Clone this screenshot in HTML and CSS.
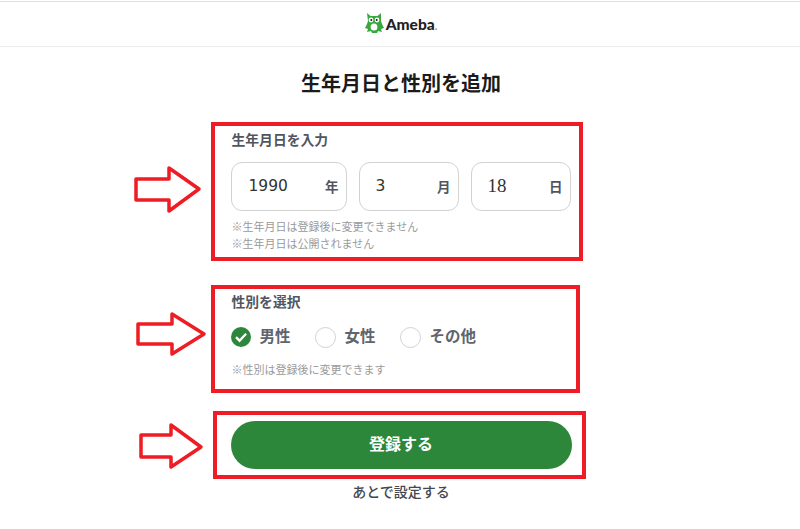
FILE: index.html
```html
<!DOCTYPE html>
<html lang="ja">
<head>
    <meta charset="UTF-8">
    <meta name="viewport" content="width=device-width, initial-scale=1.0">
    <title>生年月日と性別を追加</title>
    <link rel="stylesheet" href="styles.css">
</head>
<body>
    <header class="header">
        <svg class="logo-owl" viewBox="0 0 20 22" width="20" height="22">
            <path fill="#3aa63f" d="M3 1l3.5 3h7L17 1v8l1 3 2 4-3 1 1 3-4-1-1 2H8l-1-2-4 1 1-3-3-1 2-4 1-3z"/>
            <circle cx="7" cy="8" r="2.4" fill="#fff"/>
            <circle cx="13" cy="8" r="2.4" fill="#fff"/>
            <circle cx="7.3" cy="8" r="1" fill="#1c1c1c"/>
            <circle cx="12.7" cy="8" r="1" fill="#1c1c1c"/>
            <ellipse cx="10" cy="15" rx="3.4" ry="3.6" fill="#fff"/>
        </svg>
        <span class="logo-text">Ameba<span class="logo-dot">.</span></span>
    </header>

    <main class="main">
        <h1 class="title">生年月日と性別を追加</h1>

        <form class="form">
            <p class="label">生年月日を入力</p>
            <div class="date-row">
                <label class="date-field date-year">
                    <input class="date-input" type="text" value="1990">
                    <span class="date-unit">年</span>
                </label>
                <label class="date-field">
                    <input class="date-input" type="text" value="3">
                    <span class="date-unit">月</span>
                </label>
                <label class="date-field">
                    <input class="date-input date-serif" type="text" value="18">
                    <span class="date-unit">日</span>
                </label>
            </div>
            <p class="note note-first">※生年月日は登録後に変更できません</p>
            <p class="note">※生年月日は公開されません</p>

            <p class="label label-gender">性別を選択</p>
            <div class="radio-row">
                <div class="radio-item">
                    <svg class="radio-on" viewBox="0 0 20 20" width="20" height="20">
                        <circle cx="10" cy="10" r="10" fill="#2c873a"/>
                        <path d="M5 10.2l3.5 3.5 6.6-7" fill="none" stroke="#fff" stroke-width="2.4"/>
                    </svg>
                    <span>男性</span>
                </div>
                <div class="radio-item">
                    <span class="radio-off"></span>
                    <span>女性</span>
                </div>
                <div class="radio-item">
                    <span class="radio-off"></span>
                    <span>その他</span>
                </div>
            </div>
            <p class="note note-gender">※性別は登録後に変更できます</p>

            <button type="button" class="submit">登録する</button>
            <a class="later">あとで設定する</a>
        </form>
    </main>

    <!-- 赤い注釈 -->
    <div class="mark mark-birth"></div>
    <div class="mark mark-gender"></div>
    <div class="mark mark-submit"></div>
    <svg class="arrows" viewBox="0 0 800 529" width="800" height="529">
        <path d="M136 179h33v-11l30 21-30 22v-11h-33z"/>
        <path d="M138 324h34v-10l32 20-32 20v-10h-34z"/>
        <path d="M141 435h30v-10l30 22-30 20v-10h-30z"/>
    </svg>
</body>
</html>
```

FILE: styles.css
```css
* {
    box-sizing: border-box;
}
html, body {
    height: 100%;
}
body {
    margin: 0;
    background-color: #fff;
    color: #51565e;
    font-family: "Liberation Sans", "Noto Sans CJK JP", sans-serif;
    overflow: hidden;
    position: relative;
}
p {
    margin: 0;
}
.header {
    height: 46px;
    margin-top: 1px;
    border-top: 1px solid #e0e0e4;
    border-bottom: 1px solid #ececec;
    display: flex;
    align-items: center;
    justify-content: center;
    gap: 2px;
    padding-left: 1px;
}
.logo-owl {
    display: block;
    margin-top: -2px;
}
.logo-text {
    color: #222;
    font-family: Lato, sans-serif;
    font-size: 15.5px;
    font-weight: 900;
}
.logo-dot {
    color: #999;
    font-size: 11px;
}
.main {
    padding-left: 2px;
}
.title {
    margin: 23px 0 0;
    text-align: center;
    color: #1b1b1b;
    font-size: 20px;
    line-height: 28px;
    font-weight: 700;
}
.form {
    width: 341px;
    margin: 0 auto;
    padding-top: 15px;
}
.label {
    margin-top: 19px;
    padding-left: 1px;
    font-size: 13.8px;
    line-height: 18px;
    font-weight: 700;
}
.date-row {
    display: flex;
    gap: 12px;
    margin-top: 12px;
}
.date-field {
    flex: 0 0 100px;
    height: 49px;
    border: 1px solid #d2d2d2;
    border-radius: 11px;
    display: flex;
    align-items: center;
    justify-content: space-between;
    padding: 0 7px 0 16px;
}
.date-year {
    flex-basis: 116px;
    padding-left: 17px;
}
.date-input {
    width: 50px;
    border: none;
    outline: none;
    padding: 0;
    margin-bottom: 2px;
    color: #333;
    background: none;
    font-family: "DejaVu Sans", sans-serif;
    font-size: 15.5px;
}
.date-serif {
    font-family: "Liberation Serif", serif;
    font-size: 19px;
}
.date-unit {
    margin-bottom: 2px;
    font-size: 13.5px;
    font-weight: 700;
}
.note {
    padding-left: 1px;
    color: #9a9a9a;
    font-size: 11px;
    line-height: 17px;
}
.note-first {
    margin-top: 8px;
}
.label-gender {
    margin-top: 41px;
}
.radio-row {
    display: flex;
    gap: 24px;
    margin-top: 14px;
}
.radio-item {
    display: flex;
    align-items: center;
    gap: 9px;
    font-size: 15.5px;
    line-height: 22px;
    font-weight: 700;
    color: #60656d;
}
.radio-off {
    width: 21px;
    height: 21px;
    border: 1px solid #d2d2d2;
    border-radius: 50%;
}
.note-gender {
    margin-top: 14px;
}
.submit {
    display: block;
    width: 341px;
    height: 48px;
    margin-top: 42px;
    padding: 0 0 4px;
    border: none;
    border-radius: 24px;
    background-color: #2c873a;
    color: #fff;
    font-family: inherit;
    font-size: 16px;
    font-weight: 700;
}
.later {
    display: block;
    margin-top: 13px;
    text-align: center;
    color: #44484f;
    font-size: 14px;
    line-height: 20px;
    font-weight: 500;
}
.mark {
    position: absolute;
    border: 4px solid #ee1c25;
}
.mark-birth {
    left: 211px;
    top: 122px;
    width: 372px;
    height: 139px;
}
.mark-gender {
    left: 211px;
    top: 285px;
    width: 369px;
    height: 108px;
}
.mark-submit {
    left: 213px;
    top: 411px;
    width: 373px;
    height: 68px;
}
.arrows {
    position: absolute;
    left: 0;
    top: 0;
    fill: #fff;
    stroke: #ee1c25;
    stroke-width: 3.5;
    stroke-linejoin: round;
}
```
